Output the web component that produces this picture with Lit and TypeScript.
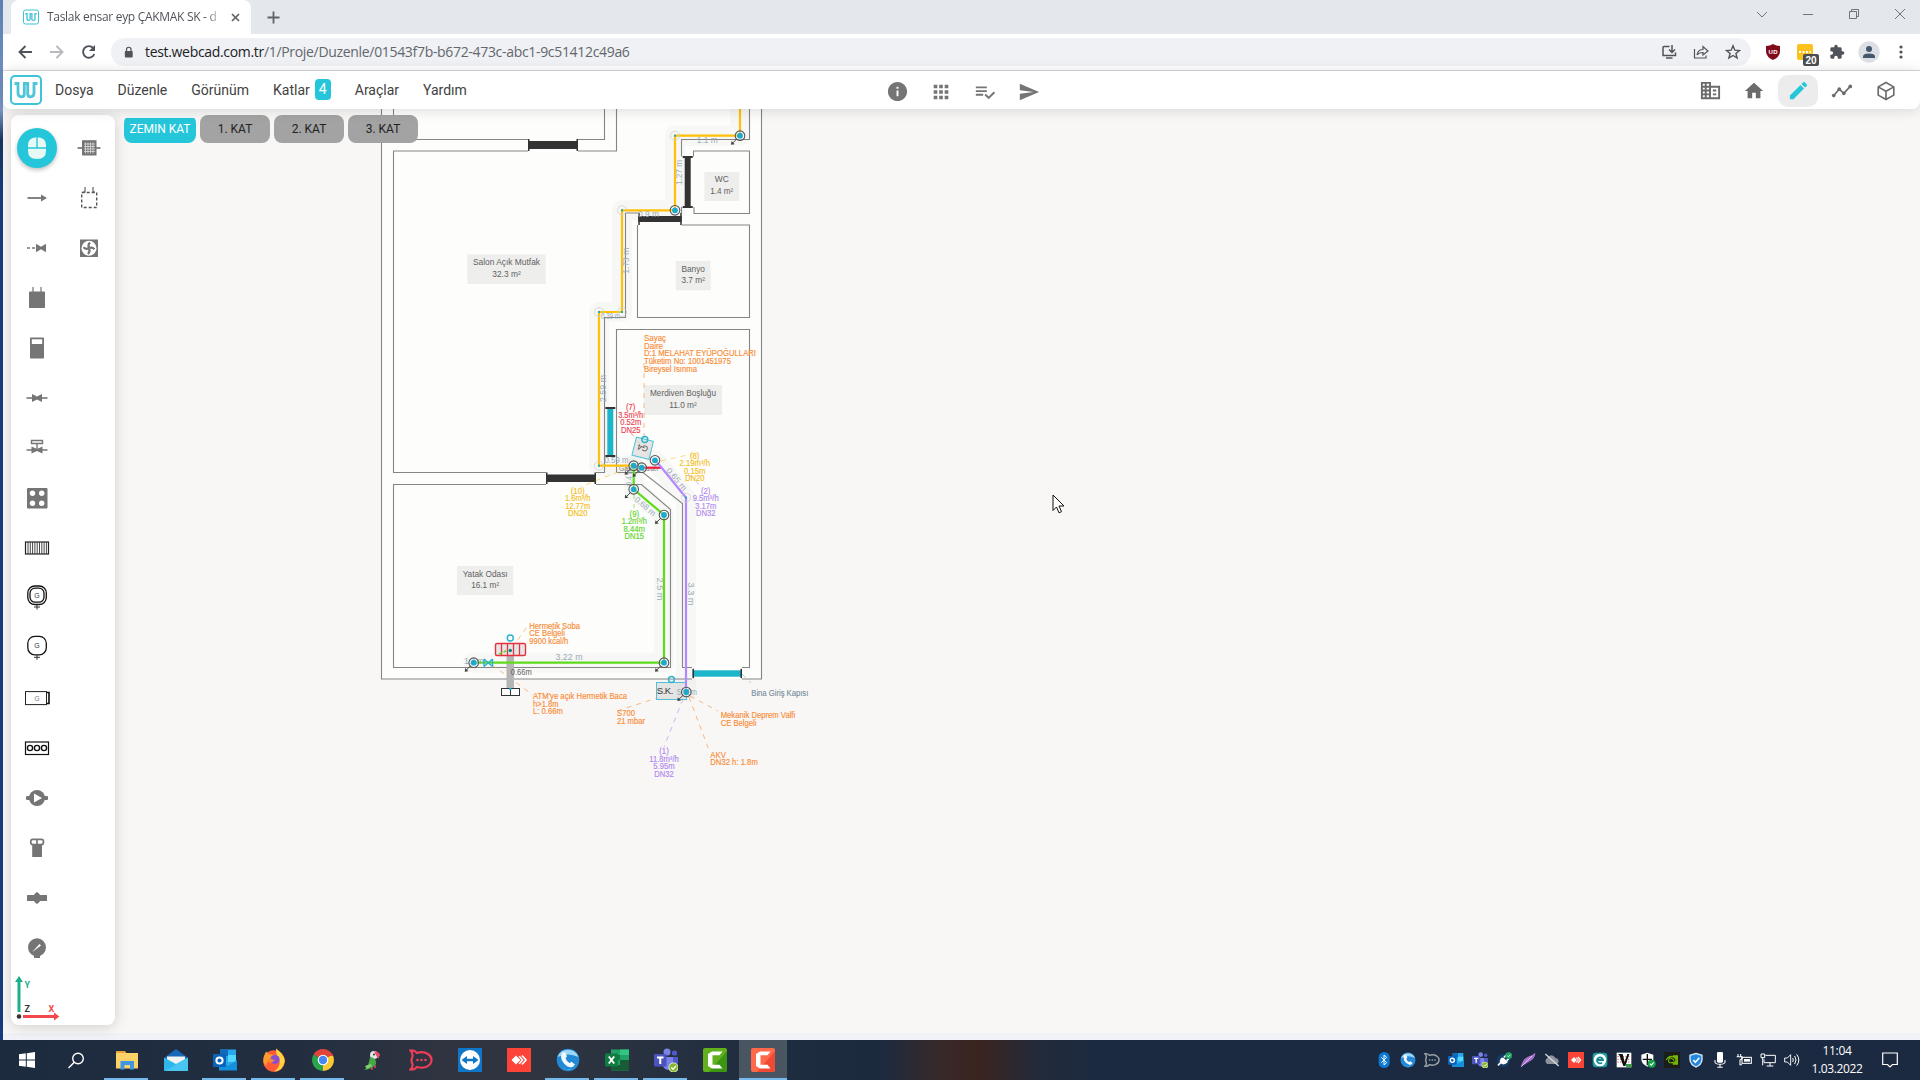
import { LitElement, html, svg, css, type TemplateResult } from "lit";
import { customElement } from "lit/decorators.js";
import { classMap } from "lit/directives/class-map.js";

type Frag = TemplateResult | unknown;

/** Wraps an SVG fragment in a sized icon. */
const icon = (body: Frag, size = 24, box = 24) =>
  html`<svg width=${size} height=${size} viewBox="0 0 ${box} ${box}" fill="currentColor">${body}</svg>`;
const p = (d: string, fill = "currentColor") => svg`<path d=${d} fill=${fill} />`;
const ln = (d: string, w = 1.5, stroke = "currentColor") =>
  svg`<path d=${d} fill="none" stroke=${stroke} stroke-width=${w} />`;

const GREY = "#757575";

/* ---------- logo ---------- */
const logo = svg`
  <rect x="1" y="1" width="30" height="28" rx="4" fill="#fff" stroke="#3fc3d6" stroke-width="2" />
  <path d="M4.500 8.500H8V18Q8 21.800 11.500 21.800Q14.300 21.800 14.300 19V8.500H17.700V19Q17.700 21.800 20.500 21.800Q24 21.800 24 18V8.500H27.500" fill="none" stroke="#4fc6d8" stroke-width="2.800" />`;

/* ---------- left tool palette, drawn in a 32-unit box ---------- */
const dn = (y: number, double: boolean) => svg`
  <rect x="6.800" y=${y} width="18.500" height="18.500" rx="7" fill="none" stroke="#111" stroke-width="1.300" />
  ${double ? svg`<rect x="9" y=${y + 2.2} width="14" height="14" rx="5" fill="none" stroke="#111" stroke-width="1.300" />` : null}
  <text x="16" y=${y + 11.6} font-size="7" text-anchor="middle" fill="#333" font-family="Liberation Sans, sans-serif">G</text>
  <path d="M13 ${y + 21}H19M16 ${y + 18.5}V${y + 23.500}" stroke="#333" stroke-width="1" />`;

const tools: Frag[] = [
  svg`<g fill="#e6f9f5"><path d="M7 15.200V13Q7 6 15.300 5.200V15.200Z" /><path d="M16.700 5.200Q25 6 25 13V15.200H16.700Z" /><path d="M7 16.800H25V19Q25 27 16 27T7 19Z" /></g>`,
  svg`<path d="M6.500 16H22" stroke=${GREY} stroke-width="1.800" /><path d="M20 12.600 26 16 20 19.400Z" fill=${GREY} />`,
  svg`<path d="M6 16H9M11 16H14" stroke=${GREY} stroke-width="1.600" /><path d="M15 11.800 20 14.800 25 11.800V20.200L20 17.200 15 20.200Z" fill=${GREY} />`,
  svg`<path d="M12 5V11M20 5V11" stroke=${GREY} stroke-width="1.200" /><rect x="8" y="9.500" width="16" height="16.500" rx=".8" fill=${GREY} />`,
  svg`<rect x="9" y="5.500" width="14" height="21" rx=".8" fill=${GREY} /><rect x="10.800" y="7.300" width="10.400" height="4.700" fill="#fff" />`,
  svg`<path d="M5.500 16H26.500" stroke=${GREY} stroke-width="1.600" /><path d="M11 12 16 14.600 21 12V20L16 17.400 11 20Z" fill=${GREY} />`,
  svg`<path d="M5.500 18H26.500M16 12V18M10.500 8.500H21.500V11.500H10.500Z" stroke=${GREY} stroke-width="1.400" fill="none" /><path d="M10.500 14.500 16 17 21.500 14.500V21.500L16 19 10.500 21.500Z" fill=${GREY} />`,
  svg`<rect x="6" y="6" width="20.500" height="20.500" rx="1" fill=${GREY} /><g fill="#fff"><circle cx="11.500" cy="11.300" r="2.700" /><circle cx="20.700" cy="11.300" r="2.700" /><circle cx="11.500" cy="21.300" r="2.700" /><circle cx="20.700" cy="21.300" r="2.700" /></g>`,
  svg`<rect x="4.500" y="10" width="23" height="12" fill="none" stroke="#222" stroke-width="1.200" />
      <path d="M7 10V22M9.300 10V22M11.600 10V22M13.900 10V22M16.200 10V22M18.500 10V22M20.800 10V22M23.100 10V22M25.400 10V22" stroke="#333" stroke-width=".9" />`,
  dn(4, true),
  dn(4.3, false),
  svg`<rect x="4.500" y="9.600" width="21" height="13" fill="#fff" stroke="#222" stroke-width="1" /><path d="M26 10.500H28V21.500H26" fill="none" stroke="#111" stroke-width="1.600" /><text x="16" y="18.500" font-size="6.500" text-anchor="middle" fill="#777" font-family="Liberation Sans, sans-serif">G</text>`,
  svg`<rect x="4.500" y="10" width="23" height="12.500" fill="#fff" stroke="#111" stroke-width="1.200" /><g fill="none" stroke="#111" stroke-width="1.400"><circle cx="9" cy="16" r="2.600" /><circle cx="16" cy="16" r="2.600" /><circle cx="23" cy="16" r="2.600" /></g>`,
  svg`<rect x="5" y="14" width="22" height="4" rx="1" fill=${GREY} /><circle cx="16" cy="16" r="8" fill=${GREY} /><path d="M13 11.500V20.500L21 16Z" fill="#fff" />`,
  svg`<rect x="9.800" y="7.300" width="12.600" height="5.200" rx="2" fill="#fff" stroke=${GREY} stroke-width="1.700" /><path d="M16 7V13" stroke=${GREY} stroke-width="1.700" /><path d="M11.200 12.500H21V25H11.200Z" fill=${GREY} />`,
  svg`<rect x="6" y="13" width="20" height="6" rx=".5" fill=${GREY} /><path d="M13 13Q13.500 11.500 16 10 18.500 11.500 19 13V19Q18.500 20.500 16 22 13.500 20.500 13 19Z" fill=${GREY} />`,
  svg`<circle cx="16" cy="15.300" r="9" fill=${GREY} /><rect x="13" y="22" width="6" height="4" fill=${GREY} /><path d="M11 20.300 18.500 12 20 13.500Z" fill="#fff" />`,
];
const sideTools: Frag[] = [
  svg`<path d="M4.500 16H27.500" stroke=${GREY} stroke-width="1.700" /><rect x="9" y="8.200" width="14.500" height="15.300" fill=${GREY} />
      <path d="M11 12H22M11 14.500H22M11 17H22M11 19.500H22M12.500 10.500V21.500M15 10.500V21.500M17.500 10.500V21.500M20 10.500V21.500" stroke="#ddd" stroke-width=".8" />`,
  svg`<rect x="8.700" y="10.500" width="15" height="15" fill="none" stroke="#555" stroke-width="1.400" stroke-dasharray="3 2" /><path d="M12 5V10H10M20 5V10H22" stroke="#555" stroke-width="1.100" fill="none" />`,
  svg`<rect x="7" y="7.500" width="18" height="17.500" fill=${GREY} /><circle cx="16" cy="16.200" r="7.500" fill="#fff" /><g fill="none" stroke=${GREY} stroke-width="2.200"><path d="M16 15.800Q14.500 13 17 10.500M16.200 16.300Q19 14.800 21.500 17.300M16 16.500Q17.500 19.300 15 22M15.800 16.200Q13 17.700 10.500 15.200" /></g>`,
];

/* ---------- header icons ---------- */
const centerIcons: Frag[] = [
  p("M12 2C6.480 2 2 6.480 2 12s4.480 10 10 10 10-4.480 10-10S17.520 2 12 2zm1 15h-2v-6h2v6zm0-8h-2V7h2v2z"),
  p("M4 8h4V4H4v4zm6 12h4v-4h-4v4zm-6 0h4v-4H4v4zm0-6h4v-4H4v4zm6 0h4v-4h-4v4zm6-10v4h4V4h-4zm-6 4h4V4h-4v4zm6 6h4v-4h-4v4zm0 6h4v-4h-4v4z"),
  p("M14 10H2v2h12v-2zm0-4H2v2h12V6zM2 16h8v-2H2v2zm19.500-4.500L23 13l-6.990 7-4.510-4.500L13 14l3.010 3 5.490-5.500z"),
  p("M2.010 21 23 12 2.010 3 2 10l15 2-15 2z"),
];
const modeIcons: Frag[] = [
  svg`<path fill-rule="evenodd" d="M2 3H12.500V7H22V21H2ZM12.500 9V19H20V9ZM4 5V7H6V5ZM8 5V7H10.500V5ZM4 9V11H6V9ZM8 9V11H10.500V9ZM4 13V15H6V13ZM8 13V15H10.500V13ZM4 17V19H6V17ZM8 17V19H10.500V17Z" /><path d="M14.500 11H18V13H14.500ZM14.500 15H18V17H14.500Z" />`,
  p("M10 20v-6h4v6h5v-8h3L12 3 2 12h3v8z"),
  p("M3 17.250V21h3.750L17.810 9.940l-3.750-3.750L3 17.250zM20.710 7.040a.996.996 0 0 0 0-1.410l-2.340-2.340a.996.996 0 0 0-1.410 0l-1.830 1.830 3.750 3.750 1.830-1.830z"),
  svg`<path d="M3 17 9 10 14 14.500 21 7" fill="none" stroke="currentColor" stroke-width="1.800" /><circle cx="3" cy="17" r="2" /><circle cx="9" cy="10" r="2" /><circle cx="14" cy="14.500" r="2" /><circle cx="21" cy="7" r="2" />`,
  ln("M12 2.800 20.500 7.500V16.500L12 21.200 3.500 16.500V7.500ZM3.500 7.500 12 12.200 20.500 7.500M12 12.200V21", 1.8),
];

/* ---------- taskbar icons, 24-unit box ---------- */
const outlook = svg`<rect x="7" y="1.500" width="16" height="19" fill="#28a8ea" /><path d="M7 1.500H15V8H7Z" fill="#0f6cbd" /><path d="M15 7H23V14H15Z" fill="#50d9ff" /><path d="M6 13 15 18 24 12V22.500H6Z" fill="#1490df" /><rect y="6" width="13" height="13" rx="1" fill="#0a63b8" /><circle cx="6.500" cy="12.500" r="3.100" fill="none" stroke="#fff" stroke-width="2" />`;
const teams = svg`<circle cx="13" cy="4" r="3.500" fill="#7b83eb" /><circle cx="20.500" cy="5" r="2.600" fill="#5059c9" /><path d="M11 9H19V17Q18 21 14 22 10 21 9 18Z" fill="#7b83eb" /><path d="M19 9H24V15Q23 18 20 18H19Z" fill="#5059c9" /><rect y="6" width="12.500" height="12.500" rx="1" fill="#4b53bc" /><path d="M3 9.500H9.500M6.250 9.500V16" stroke="#fff" stroke-width="2" /><circle cx="19.500" cy="19.500" r="5" fill="#e8f5d0" /><circle cx="19.500" cy="19.500" r="4.200" fill="#84b72c" /><path d="M17.300 19.500 19 21.200 22 18" fill="none" stroke="#fff" stroke-width="1.400" />`;
const anydesk = svg`<rect width="24" height="24" fill="#fb4337" /><path d="M4.500 12 9 7.500 13.500 12 9 16.500Z" fill="#fff" /><path d="M11 8.500 13 7.500 17 12 13 16.500 11 15.500 14 12Z" fill="#fff" stroke="#fb4337" stroke-width=".8" /><path d="M15 7.500 19 12 15 16.500" fill="none" stroke="#fff" stroke-width="1.700" />`;
const phone = svg`<circle cx="12" cy="12" r="11.300" fill="#2389d7" /><path d="M1.500 9Q12 4 22.500 9A11.200 11.200 0 0 0 1.500 9Z" fill="#9fd6f5" /><path d="M6 19Q12 24 19 19L21.500 15Q18 22 12 22Z" fill="#6ec6f1" /><path d="M6.500 4.500Q4 8 6 12.500 9 18 14 19.300 17.500 19.500 19 16.500L15.500 13.800 13.500 15Q10.500 13.500 9.500 10L11 8.500 9.300 4.300Z" fill="#f2f9fe" />`;
const camtasia = (c1: string, c2: string) => svg`<rect width="24" height="24" rx="2" fill=${c1} /><path d="M24 3V22Q24 24 22 24H6Z" fill=${c2} /><path d="M19.500 3.500H9L5 6V18L9 20.500H19.500L16.500 16.700H9.500V7.300H16.500Z" fill="#fff" />`;
const chat = (c: string) => svg`<path d="M1.500 2.500Q5.500 2 8 5 14 3 19 6 23 9 22.500 12.500 22 17 17 19 12.500 20.500 8 19 5.500 22 1.500 21.500 4 19 3.500 16 1.500 12.500 3.500 8.500 4 5 1.500 2.500Z" fill="none" stroke=${c} stroke-width="2.200" /><g fill=${c}><circle cx="8.500" cy="12" r="1.300" /><circle cx="12.500" cy="12" r="1.300" /><circle cx="16.500" cy="12" r="1.300" /></g>`;

interface TaskApp { body: Frag; open?: boolean; active?: boolean; }
const taskApps: TaskApp[] = [
  { open: true, body: svg`<path d="M1 3H10L11.500 5V8H1Z" fill="#e8a33a" /><rect x="1" y="5" width="22" height="15.500" fill="#fdd367" /><path d="M5.500 21.500V13H19V21.500H15V17H9.500V21.500Z" fill="#3f97e4" />` },
  { body: svg`<path d="M0 10 12 1 24 10V13H0Z" fill="#1769b8" /><path d="M3 8.500H21V17H3Z" fill="#f3f3f3" /><path d="M0 9.500 12 16 24 9.500V23H0Z" fill="#2fb6ea" /><path d="M24 9.500V23H1Z" fill="#52cdf3" opacity=".7" />` },
  { open: true, body: outlook },
  { open: true, body: svg`<circle cx="12" cy="13" r="10.800" fill="#ff5b36" /><path d="M14 .500Q22 6 22.800 13 21 23 12 23.500 19 19 17.500 12 14 8 14 .500Z" fill="#ffd43e" /><path d="M2 8 4 3.500 7 6 12 7Q8 9 10 12Q5 12 4 18 0 14 2 8Z" fill="#ff9b2f" /><circle cx="13" cy="11.500" r="4.600" fill="#8a4fd0" /><path d="M7 10 13 12.500 8 15Q4 13 7 10Z" fill="#ff8a2a" />` },
  { open: true, body: svg`<path d="M12 12 2.500 6.500A11 11 0 0 1 21.500 6.500Z" fill="#e0453a" /><path d="M12 12 2.500 6.500A11 11 0 0 0 12 23Z" fill="#2ba24c" /><path d="M12 12 21.500 6.500A11 11 0 0 1 12 23Z" fill="#fcc934" /><path d="M12 7H21.800" stroke="#e0453a" stroke-width="2" /><circle cx="12" cy="12" r="5.300" fill="#fff" /><circle cx="12" cy="12" r="4.200" fill="#4688f1" />` },
  { body: svg`<circle cx="14" cy="7" r="4" fill="#dfe3e6" /><circle cx="14" cy="6.500" r="1" fill="#333" /><path d="M14 3.500Q19 3 20 7L18 11 16.500 8Z" fill="#ec4f6a" /><path d="M10 9Q17 10 16 16 13 21 4 22 9 18 10 9Z" fill="#45a845" /><path d="M5 18 11 16 12 18 7 21Z" fill="#86ce76" /><path d="M12 19V22M15 17V20" stroke="#ec4f6a" stroke-width="1.300" />` },
  { body: chat("#ee3d58") },
  { body: svg`<rect width="24" height="24" fill="#0f76c8" /><circle cx="12" cy="12" r="10" fill="#fff" /><path d="M3.500 12 9 8V10.800H15V8L20.500 12 15 16V13.200H9V16Z" fill="#0f76c8" />` },
  { body: anydesk },
  { open: true, body: phone },
  { open: true, body: svg`<rect x="6" y="1.500" width="18" height="21" fill="#21a366" /><path d="M15 1.500H24V7H15Z" fill="#33c481" /><path d="M15 12H24V22.500H6V17H15Z" fill="#185c37" /><path d="M6 7H15V12H6Z" fill="#107c41" /><rect y="5.500" width="13" height="13" rx="1" fill="#107c41" /><path d="M3.800 8.500 9.200 15.500M9.200 8.500 3.800 15.500" stroke="#fff" stroke-width="1.900" />` },
  { open: true, body: teams },
  { body: camtasia("#62b01e", "#3b9412") },
  { open: true, active: true, body: camtasia("#ff694a", "#f04a34") },
];

const trayIcons: Frag[] = [
  svg`<rect x="4" y="0" width="16.500" height="24" rx="8" fill="#0c78d4" /><path d="M8 8 16 16 12 19.500V4.500L16 8 8 16" fill="none" stroke="#fff" stroke-width="1.500" />`,
  phone,
  chat("#9aa0a8"),
  outlook,
  teams,
  svg`<circle cx="11" cy="13" r="10" fill="#123c66" /><path d="M3 20 8 15M10 9 16 15Q11 19 8 16T10 9M12 8 15 5M16 13 19 10" stroke="#fff" stroke-width="2.500" fill="#fff" /><circle cx="19" cy="5.500" r="5" fill="#1fa463" /><path d="M17 5.500 18.700 7.200 21.500 4" stroke="#fff" fill="none" stroke-width="1.300" />`,
  svg`<path d="M1 23Q4 10 12 7T23 1Q23 9 16 13T1 23Z" fill="#a873cf" /><path d="M2 22 18 6" stroke="#e3c6f4" stroke-width="1.300" />`,
  svg`<path d="M5 18A5 5 0 0 1 5 9 6.500 6.500 0 0 1 17 9 5 5 0 0 1 20 18Z" fill="#8d939c" /><path d="M2 3 22 21" stroke="#d8dade" stroke-width="2" />`,
  anydesk,
  svg`<rect x="1" y="1" width="22" height="22" rx="5" fill="#1aa0a6" /><circle cx="12" cy="12" r="9.500" fill="#fff" /><path d="M7.500 12H16.500A4.500 4.500 0 1 0 15 16" fill="none" stroke="#138a93" stroke-width="2.800" />`,
  svg`<rect x="1" y="1" width="22" height="22" fill="#fff" /><path d="M2 7H22M2 11H22M2 15H22" stroke="#c33" stroke-width="1.200" stroke-dasharray="2 2" /><path d="M3 3H10L13 15 17 3H20L14 21H11L5 5Z" fill="#111" /><path d="M15 18H23V23H15Z" fill="#39a046" />`,
  svg`<path d="M11 1 20 4V11Q20 18 11 22 2 18 2 11V4Z" fill="#fff" /><path d="M11 3V20M4 11H18" stroke="#111" stroke-width="2" /><circle cx="17.500" cy="17.500" r="6" fill="#16a34a" /><path d="M14.700 17.500 17 19.700 20.500 15.500" stroke="#fff" fill="none" stroke-width="1.600" />`,
  svg`<rect width="24" height="24" fill="#1b1e18" /><path d="M3 12Q8 5 13 7T18 12 12 16 7 12 12 10 14 12" fill="none" stroke="#76b900" stroke-width="1.700" /><path d="M13 5H21V19H13V17Q18 16 19 12 18 8 13 7Z" fill="#76b900" />`,
  svg`<path d="M12 1 22 4V12Q21 20 12 23.500 3 20 2 12V4Z" fill="#d7ecfb" /><path d="M12 3.500 20 5.800V12Q19 18.500 12 21.500 5 18.500 4 12V5.800Z" fill="#2586dd" /><path d="M8 12 11 15.500 17 8.500" fill="none" stroke="#fff" stroke-width="2.300" />`,
  svg`<rect x="7.500" y="0" width="9" height="16" rx="2" fill="#fff" /><path d="M4.500 12V15Q5 18.500 12 18.500T19.500 15V12M12 18.500V23M8 23H16" fill="none" stroke="#fff" stroke-width="1.600" />`,
  svg`<rect x="9" y="8" width="14" height="9" fill="none" stroke="#fff" stroke-width="1.600" /><rect x="12" y="10.500" width="9" height="4" fill="#fff" /><path d="M3 3V7M7 3V7M1 7H9V10L6 12V19H9" fill="none" stroke="#fff" stroke-width="1.600" />`,
  svg`<path d="M8 5H23V16H6V11M15 16V21M10 21H20" fill="none" stroke="#fff" stroke-width="1.500" /><path d="M1.500 3H7V8.500H1.500ZM4 8.500V20" fill="none" stroke="#fff" stroke-width="1.500" />`,
  svg`<path d="M1 9H5L10 4V20L5 15H1Z" fill="none" stroke="#fff" stroke-width="1.400" /><path d="M13 9Q15 12 13 15M16 6Q20 12 16 18M19 3.500Q25.500 12 19 20.500" fill="none" stroke="#fff" stroke-width="1.500" />`,
];

/* ---------- floor plan ---------- */
type Line = [text: string, width: number];
const ORANGE = "#f98b35";
const YELLOW = "#f5bd22";
const GREEN = "#5fd62a";
const PURPLE = "#b087f2";
const RED = "#ee3f55";

interface Note { x: number; y: number; lines: Line[]; color: string; mid?: boolean; }
const notes: Note[] = [
  { x: 644, y: 341.3, color: ORANGE, lines: [["Sayaç", 22], ["Daire", 19], ["D:1 MELAHAT EYÜPOĞULLARI", 112], ["Tüketim No: 1001451975", 87], ["Bireysel Isınma", 53]] },
  { x: 630.7, y: 410, color: RED, mid: true, lines: [["(7)", 9.5], ["3.5m³/h", 25], ["0.52m", 21], ["DN25", 19.5]] },
  { x: 694.7, y: 458.7, color: YELLOW, mid: true, lines: [["(8)", 9.5], ["2.19m³/h", 30.5], ["0.15m", 21.5], ["DN20", 19.5]] },
  { x: 705.7, y: 493.7, color: PURPLE, mid: true, lines: [["(2)", 9.5], ["9.5m³/h", 26], ["3.17m", 21], ["DN32", 19.5]] },
  { x: 634.3, y: 516.7, color: GREEN, mid: true, lines: [["(9)", 9.5], ["1.2m³/h", 25], ["8.44m", 21.5], ["DN15", 19.5]] },
  { x: 577.7, y: 493.5, color: YELLOW, mid: true, lines: [["(10)", 14], ["1.6m³/h", 25.5], ["12.77m", 25], ["DN20", 19.5]] },
  { x: 664, y: 754.3, color: PURPLE, mid: true, lines: [["(1)", 9.5], ["11.8m³/h", 29.5], ["5.95m", 21.5], ["DN32", 19.5]] },
  { x: 529.3, y: 628.7, color: ORANGE, lines: [["Hermetik Soba", 50.7], ["CE Belgeli", 35.7], ["9900 kcal/h", 39]] },
  { x: 533, y: 699.3, color: ORANGE, lines: [["ATM'ye açık Hermetik Baca", 94], ["h>1.8m", 25.5], ["L: 0.66m", 30]] },
  { x: 617, y: 716.3, color: ORANGE, lines: [["S700", 18], ["21 mbar", 28]] },
  { x: 720.7, y: 718.3, color: ORANGE, lines: [["Mekanik Deprem Valfi", 74.5], ["CE Belgeli", 35.7]] },
  { x: 710.3, y: 757.7, color: ORANGE, lines: [["AKV", 15.5], ["DN32 h: 1.8m", 47.5]] },
  { x: 751.3, y: 696.3, color: "#78909c", lines: [["Bina Giriş Kapısı", 57]] },
];

interface Room { x: number; y: number; w: number; h: number; name: string; nw: number; area: string; aw: number; base: number; }
const rooms: Room[] = [
  { x: 467.3, y: 254.3, w: 78.4, h: 29.7, name: "Salon Açık Mutfak", nw: 67, area: "32.3 m²", aw: 28.5, base: 265 },
  { x: 704.3, y: 172, w: 35, h: 29, name: "WC", nw: 14, area: "1.4 m²", aw: 23, base: 182 },
  { x: 675.7, y: 261, w: 35, h: 29.3, name: "Banyo", nw: 23.5, area: "3.7 m²", aw: 23.5, base: 271.7 },
  { x: 644, y: 385, w: 78, h: 30, name: "Merdiven Boşluğu", nw: 66, area: "11.0 m²", aw: 27.5, base: 396 },
  { x: 457, y: 566, w: 56.3, h: 29, name: "Yatak Odası", nw: 45, area: "16.1 m²", aw: 28, base: 576.5 },
];

/** Dimension texts: label, centre x, baseline y, width, rotation. */
const dims: [string, number, number, number, number][] = [
  ["1.1 m", 707.3, 142.7, 21, 0],
  ["1.27 m", 682, 172.5, 25, -90],
  ["0.9 m", 648.5, 217.3, 21, 0],
  ["1.73 m", 629, 260.7, 26, -90],
  ["0.39 m", 610.5, 318.7, 19, 0],
  ["2.59 m", 606, 388.5, 27, -90],
  ["0.59 m", 616.5, 463, 24, 0],
  ["0.4 m", 632, 477, 18, -90],
  ["0.65 m", 674.5, 481, 27, 50],
  ["0.68 m", 643.5, 508.5, 25, 40],
  ["2.5 m", 657, 589, 23, 90],
  ["3.3 m", 687.5, 594, 23, 90],
  ["3.22 m", 569, 660, 27, 0],
  ["1.1m", 474, 664, 20, 0],
  ["5.95m", 687, 694.5, 20, 0],
];

const nodes: [number, number, boolean][] = [
  [740, 135.7, true], [675, 210.3, false], [633.7, 465.7, true], [641.7, 467.7, true], [655, 460.3, false],
  [633.7, 489.3, true], [664, 515, true], [664, 662.7, true], [473.7, 662.7, true], [686.3, 692, true],
];
const joints: [number, number][] = [[675, 135.7], [622, 210.3], [622, 312], [599, 312], [599, 465.7], [686, 497.7]];
const leaders: [string, string][] = [
  ["M644 363V440L648 455", ORANGE], ["M661 461 692 454", YELLOW], ["M628 468 580 487", YELLOW], ["M634 494V508", GREEN], ["M640 444 631 433", RED], ["M688 474 700 485", PURPLE],
  ["M512 648 527 627", ORANGE], ["M492 665 533 695", ORANGE], ["M660 697 617 711", ORANGE], ["M690 696 718 711", ORANGE],
  ["M689 697 709 750", ORANGE], ["M683 699 664 747", PURPLE], ["M742 674 751 683", "#90a4ae"],
];
const walls =
  "M393.500 109V139.500H528M578 139.500H604.500V109M381.500 109V679H692M616.500 109V151H578M528 151H393.500V472.500H546" +
  "M596 472.500H604.500V317.500H625.500V213H638.500M681.500 156.500V139.500H749.500V109M693.500 156.500V151H749.500V213.500H694V207M681.500 207V213" +
  "M681.500 225H749.500V317.500H637.500V225M761.500 109V679H742M546 484.500H393.500V667.500H670.500V509.500L641.500 484.500H596" +
  "M616.500 472.500V329.500H749.500V667.500H742M692 667.500H682.500V503.500L643 472.500H616.500";

@customElement("plan-canvas")
export class PlanCanvas extends LitElement {
  static styles = css`
    :host { display: block; height: 924px; }
    svg { display: block; }
    text { font-family: "Liberation Sans", Arial, sans-serif; }
    .note { font-size: 8.4px; stroke-width: 0.15px; }
    .room { font-size: 8.2px; fill: #616161; }
    .dim { font-size: 8.2px; fill: #9aacb8; }
    .wall { fill: none; stroke: #858585; stroke-width: 1.1; }
    .halo { fill: none; stroke: #888; stroke-opacity: 0.05; stroke-width: 20; stroke-linecap: round; stroke-linejoin: round; }
    .pipe { fill: none; stroke-width: 2.2; }
    .ring { fill: #fff; fill-opacity: 0.3; stroke: #555; stroke-width: 1.1; }
    .joint { fill: none; stroke: #ccc; stroke-width: 0.7; }
    .dot { fill: #1ba9cc; }
    .cyan { fill: none; stroke: #29b2cc; stroke-width: 1.4; }
    .unit { fill: #dedede; fill-opacity: 0.8; stroke: #4fc0d8; stroke-width: 1; }
    .door { fill: #333; }
    .glass { fill: #1cb5c9; }
  `;

  private label(t: string, x: number, y: number, w: number, cls: string, mid: boolean, color?: string) {
    return svg`<text class=${cls} x=${x} y=${y} textLength=${w} lengthAdjust="spacingAndGlyphs"
      text-anchor=${mid ? "middle" : "start"} fill=${color ?? "#616161"} stroke=${color ?? "none"}>${t}</text>`;
  }

  private door(x: number, y: number, len: number, thick: number, gap: number, vertical: boolean, cls: string) {
    return vertical
      ? svg`<rect class=${cls} x=${x} y=${y} width=${thick} height=${len} /><rect class="door" x=${x - gap} y=${y - 1} width=${thick + gap * 2} height="2" /><rect class="door" x=${x - gap} y=${y + len - 1} width=${thick + gap * 2} height="2" />`
      : svg`<rect class=${cls} x=${x} y=${y} width=${len} height=${thick} /><rect class="door" x=${x} y=${y - gap} width="1.500" height=${thick + gap * 2} /><rect class="door" x=${x + len - 1.5} y=${y - gap} width="1.500" height=${thick + gap * 2} />`;
  }

  render() {
    return html`<svg width="1917" height="924" viewBox="3 109 1917 924">
      <rect x="381.500" y="109" width="380" height="570" fill="#fdfdfb" />
      <path class="halo" d="M740 109V135.700H675V210.300H622V312H599V465.700H633.700" />
      <path class="halo" d="M473 662.700H664V515L634 489V466M655 460 686 498V692" />
      <path class="wall" d=${walls} />
      ${this.door(528, 141, 50, 8, 2, false, "door")}
      ${this.door(546, 474.500, 50, 7.5, 2, false, "door")}
      ${this.door(638.3, 216, 43.4, 6, 3, false, "door")}
      ${this.door(684.7, 157, 50, 6, 2, true, "door")}
      ${this.door(607.3, 408, 48, 6, 2, true, "glass")}
      ${this.door(692.5, 670.3, 49.5, 6.4, 1.5, false, "glass")}
      ${rooms.map(r => svg`<rect x=${r.x} y=${r.y} width=${r.w} height=${r.h} fill="#eeeeed" />
        ${this.label(r.name, r.x + r.w / 2, r.base, r.nw, "room", true)}
        ${this.label(r.area, r.x + r.w / 2, r.base + 11.7, r.aw, "room", true)}`)}
      ${leaders.map(([d, c]) => svg`<path d=${d} fill="none" stroke=${c} stroke-width=".9" stroke-dasharray="5 5" opacity=".65" />`)}
      <rect x="506.500" y="651" width="7.500" height="39" fill="#b5b5b5" />
      <rect x="501.500" y="688.500" width="18" height="7" fill="#fff" stroke="#333" /><path d="M510.500 688V696" stroke="#333" />
      <rect x="495.500" y="643.500" width="30" height="12" rx="1.500" fill="#e6e6e6" stroke="#e53240" stroke-width="1.400" />
      <path d="M501.500 643.500V655.500M507.500 643.500V655.500M513.500 643.500V655.500M519.500 643.500V655.500" stroke="#e53240" stroke-width="1.300" />
      <rect class="unit" x="656.500" y="682.500" width="30" height="17" />
      <text x="656.800" y="693.800" font-size="9.500" textLength="16.500" fill="#333">S.K.</text>
      <g transform="rotate(14 642.500 448)"><rect class="unit" x="634" y="439" width="17.500" height="18.500" /><text transform="rotate(180 642.500 448)" x="637" y="451" font-size="8" fill="#444">G4</text></g>
      <text x="619" y="470.500" font-size="6.500" fill="#777" textLength="39">Gaz Tesisatı</text>
      <path class="pipe" stroke="#ffc107" d="M740 109V135.700H675V210.300H622V312H599V465.700H633.700" />
      <path class="pipe" stroke="#f0183c" d="M641.700 467.700H661" />
      <path class="pipe" stroke="#b388ff" d="M655 460.300 661.700 467.700 686 497.700V692" />
      <path class="pipe" stroke="#5fdb1b" d="M633.700 465.700V489.300L664 515V662.700H473.700" />
      ${dims.map(([t, x, y, w, a]) => svg`<text class="dim" x=${x} y=${y} textLength=${w} lengthAdjust="spacingAndGlyphs" text-anchor="middle" transform="rotate(${a} ${x} ${y})">${t}</text>`)}
      ${this.label("0.66m", 510.7, 674.5, 21, "room", false)}
      ${joints.map(([x, y]) => svg`<circle class="joint" cx=${x} cy=${y} r="4.500" /><rect class="dot" x=${x - 1} y=${y - 1} width="2" height="2" />`)}
      ${nodes.map(([x, y, arrow]) => svg`<circle class="ring" cx=${x} cy=${y} r="4.800" /><circle class="dot" cx=${x} cy=${y} r="2.900" />
        ${arrow ? svg`<path d="M${x - 3.3} ${y + 3.3}L${x - 8} ${y + 8}" stroke="#444" stroke-width="1" /><path d="M${x - 9} ${y + 9}L${x - 8.500} ${y + 5.300} ${x - 5.300} ${y + 8.500}Z" fill="#444" />` : null}`)}
      <path class="cyan" d="M484 659 492.500 666.500M484 666.500 492.500 659M484 659V666.500M492.500 659V666.500" stroke-width="1" />
      <path d="M499 654 508 650" stroke=${GREEN} stroke-width="1.500" stroke-dasharray="3 2" />
      <circle cx="510.300" cy="650.500" r="1.700" fill="#00897b" /><circle class="dot" cx="510.300" cy="689" r="1.300" />
      <circle class="cyan" cx="510.300" cy="638" r="3" />
      <circle class="cyan" cx="644.800" cy="439.500" r="3" />
      <circle class="cyan" cx="671.500" cy="679.500" r="3" />
      ${notes.map(n => n.lines.map(([t, w], i) => this.label(t, n.x, n.y + i * 7.55, w, "note", !!n.mid, n.color)))}
    </svg>`;
  }
}

@customElement("app-root")
export class AppRoot extends LitElement {
  static styles = css`
    :host { display: block; width: 1920px; height: 1080px; overflow: hidden; font-family: Roboto, sans-serif; color: #424242; }
    * { box-sizing: border-box; }
    svg { display: block; flex: none; }
    .screen { position: relative; height: 1080px; display: flex; flex-direction: column; background: linear-gradient(#5b7fb5 0, #7895c6 110px, #17335f 140px, #173b7d 190px, #173b7d 100%); }
    .window { height: 1040px; margin-left: 3px; display: flex; flex-direction: column; background: #f8f7f6; }
    .strip { height: 34px; background: #e4e8ed; display: flex; align-items: flex-end; padding-left: 8px; color: #5f6368; }
    .tab { width: 240px; height: 34px; background: #fff; border-radius: 8px 8px 0 0; display: flex; align-items: center; padding: 0 9px 0 12px; }
    .title { width: 176px; margin-left: 8px; font: 12px/16px "Open Sans", sans-serif; letter-spacing: -0.3px; white-space: nowrap; color: #50545a; -webkit-mask-image: linear-gradient(90deg, #000 160px, transparent 176px); }
    .tab-close { margin-left: 8px; }
    .plus { align-self: center; margin-left: 16px; }
    .controls { align-self: flex-start; margin-left: auto; margin-right: -3px; height: 28px; display: flex; color: #70757a; }
    .controls span { width: 46px; display: grid; place-items: center; }
    .toolbar { height: 37px; flex: none; background: #fff; border-bottom: 1px solid #d5d7da; display: flex; align-items: center; padding: 0 3px 0 6px; color: #50545a; }
    .cell { width: 32px; display: grid; place-items: center; flex: none; }
    .dim { color: #b8babd; }
    .omni { height: 28px; width: 1640px; margin-left: 6px; border-radius: 14px; background: #eff1f4; display: flex; align-items: center; padding: 0 2px 0 12px; }
    .url { margin-left: 10px; font: 14px/20px "Open Sans", sans-serif; letter-spacing: -0.32px; color: #63676c; flex: 1; white-space: nowrap; }
    .url b { font-weight: 400; color: #202124; }
    .ext { margin-left: 6px; display: flex; }
    .mark { font-family: "Liberation Sans", sans-serif; font-weight: 700; }
    .header { height: 38px; flex: none; background: #fff; border-radius: 0 0 8px 8px; box-shadow: 0 1px 14px rgba(0, 0, 0, 0.14); display: flex; align-items: center; padding: 0 14px 0 7px; position: relative; z-index: 1; }
    .menu { display: flex; align-items: center; gap: 24px; margin-left: 13px; width: 820px; font-size: 14px; line-height: 20px; padding-bottom: 1px; }
    .menu span { display: flex; align-items: center; gap: 5px; }
    .count { width: 16px; height: 21px; border-radius: 4px; background: #26c6da; color: #fff; text-align: center; line-height: 21px; font-style: normal; }
    .center { display: flex; color: #757575; padding-top: 3px; }
    .center i { width: 44px; display: grid; place-items: center; }
    .modes { display: flex; gap: 4px; margin-left: auto; color: #6b6b6b; padding-top: 1px; }
    .mode { width: 40px; height: 32px; border-radius: 10px; display: grid; place-items: center; }
    .mode.on { background: #ececec; color: #26c6da; }
    .body { height: 924px; position: relative; }
    .overlay { position: absolute; inset: 0; display: flex; align-items: flex-start; padding: 6px 0 0 8px; gap: 9px; }
    .palette { width: 104px; height: 910px; border-radius: 8px; background: #fff; box-shadow: 0 2px 14px rgba(0, 0, 0, 0.16); display: flex; flex-wrap: wrap; padding-top: 8px; align-content: flex-start; }
    .col { width: 52px; display: flex; flex-direction: column; }
    .tool { height: 50px; display: grid; place-items: center; }
    .puck { width: 40px; height: 40px; border-radius: 50%; display: grid; place-items: center; }
    .puck.on { background: #26c6da; box-shadow: 0 2px 4px rgba(0, 0, 0, 0.25); }
    .axes { margin: 2px 0 0 3px; }
    .floors { display: flex; gap: 4px; }
    .floor { width: 70px; height: 28px; border-radius: 8px; background: #a3a3a3; color: #222; font-size: 12px; line-height: 28px; text-align: center; white-space: nowrap; }
    .floor.on { width: 72px; background: linear-gradient(#f1f6f6 3px, #26c6da 3px); color: #fff; }
    .foot { height: 7px; background: #f0f2f7; }
    .taskbar { height: 40px; display: flex; padding-left: 3px; background: linear-gradient(90deg, #1d2b3f 0, #222e40 300px, #2f3440 440px, #2e3440 560px, #1f2d40 760px, #1c2a3f 880px, #38292a 940px, #3a241f 980px, #222a3b 1040px, #1b2a40 1100px, #1b2a40 100%); color: #fff; }
    .start { width: 48px; display: grid; place-items: center; }
    .search { width: 51px; display: grid; place-items: center; }
    .app { width: 49px; height: 40px; display: grid; place-items: center; }
    .app.open { border-bottom: 2px solid transparent; border-image: linear-gradient(90deg, transparent 4px, #76b9ed 4px, #76b9ed 44px, transparent 44px) 2; padding-top: 2px; }
    .app.active.open { width: 48px; background: #4a5562; border-image: none; border-bottom-color: #76b9ed; }
    .tray { margin-left: auto; display: flex; align-items: center; }
    .tray i { width: 24px; display: grid; place-items: center; }
    .clock { width: 66px; text-align: center; font: 12px/18px "Open Sans", sans-serif; letter-spacing: -0.35px; }
    .action { width: 40px; display: grid; place-items: center; margin-right: 10px; }
    .cursor { position: absolute; left: 1052px; top: 494px; z-index: 3; }
  `;

  private menus = ["Dosya", "Düzenle", "Görünüm", "Katlar", "Araçlar", "Yardım"];
  private floors = ["ZEMIN KAT", "1. KAT", "2. KAT", "3. KAT"];

  private renderChrome() {
    return html`
      <div class="strip">
        <div class="tab">
          <svg width="16" height="16" viewBox="0 0 32 30">${logo}</svg>
          <div class="title">Taslak ensar eyp ÇAKMAK SK - d</div>
          <svg class="tab-close" width="9" height="9" viewBox="0 0 9 9">${ln("M1 1 8 8M8 1 1 8", 1.7)}</svg>
        </div>
        <svg class="plus" width="13" height="13" viewBox="0 0 13 13">${ln("M6.500 .500V12.500M.500 6.500H12.500", 1.8)}</svg>
        <div class="controls">
          <span>${icon(ln("M1 4 6 9 11 4", 1), 12, 12)}</span>
          <span>${icon(ln("M1 6.500H11", 1), 12, 12)}</span>
          <span>${icon(ln("M1.500 3.500H8.500V10.500H1.500ZM3.500 3.500V1.500H10.500V8.500H8.500", 1), 12, 12)}</span>
          <span>${icon(ln("M1 1 11 11M11 1 1 11", 1), 12, 12)}</span>
        </div>
      </div>
      <div class="toolbar">
        <div class="cell">${icon(ln("M15 8H2.500M8.500 2 2.500 8 8.500 14", 1.9), 16, 16)}</div>
        <div class="cell dim">${icon(ln("M1 8H13.500M7.500 2 13.500 8 7.500 14", 1.9), 16, 16)}</div>
        <div class="cell">${icon(svg`${ln("M13.300 10A5.800 5.800 0 1 1 12.300 4.200", 1.9)}${p("M14 1V7H8Z")}`, 16, 16)}</div>
        <div class="omni">
          ${icon(svg`<rect x="2" y="5.500" width="8.500" height="7" rx="1" />${ln("M3.800 6V3.800A2.400 2.400 0 0 1 8.700 3.800V6", 1.3)}`, 12, 13)}
          <div class="url"><b>test.webcad.com.tr</b>/1/Proje/Duzenle/01543f7b-b672-473c-abc1-9c51412c49a6</div>
          <div class="cell">${icon(ln("M8.500 2.500H3Q2 2.500 2 3.500V11.500H14.500V8.500M5 14H11.500M11 1V8M8 5.500 11 8.500 14 5.500", 1.5), 16, 16)}</div>
          <div class="cell">${icon(ln("M1.500 5V14H13V11.500M4 11Q5 5.500 10 5.500V2.500L15 7 10 11V8.500Q6 8.500 4 11Z", 1.2), 16, 16)}</div>
          <div class="cell">${icon(ln("M8 1.800 9.800 6.200 14.500 6.500 10.900 9.500 12.100 14 8 11.500 3.900 14 5.100 9.500 1.500 6.500 6.200 6.200Z", 1.4), 16, 16)}</div>
        </div>
        <div class="ext">
          <div class="cell">${icon(svg`<path d="M8 0Q11 2 15 2V8Q14.500 13 8 16 1.500 13 1 8V2Q5 2 8 0Z" fill="#800b1b" /><text class="mark" x="8" y="9.800" text-anchor="middle" font-size="6" fill="#fff" textLength="9">UD</text>`, 16, 16)}</div>
          <div class="cell">
            <svg width="24" height="24" viewBox="0 0 24 24" overflow="visible"><rect x="4" y="4" width="16" height="16" rx="2" fill="#fbc11c" /><path d="M6 12H18" stroke="#fff" stroke-width="2" stroke-dasharray="2 1.500" /><rect x="10" y="14" width="16" height="12" rx="2" fill="#4a4d52" /><text class="mark" x="18" y="23.500" text-anchor="middle" font-size="10" fill="#fff">20</text></svg>
          </div>
          <div class="cell">${icon(p("M20.500 11H19V7a2 2 0 0 0-2-2h-4V3.500a2.500 2.500 0 0 0-5 0V5H4a2 2 0 0 0-2 2v3.800h1.500a2.700 2.700 0 0 1 0 5.400H2V20a2 2 0 0 0 2 2h3.800v-1.500a2.700 2.700 0 0 1 5.400 0V22H17a2 2 0 0 0 2-2v-4h1.500a2.500 2.500 0 0 0 0-5z"), 16)}</div>
          <div class="cell">${icon(svg`<circle cx="11" cy="11" r="10.700" fill="#dcdfe3" /><circle cx="11" cy="8" r="3" fill="#44576d" /><path d="M5 17V15.500Q5 12.500 11 12.500T17 15.500V17Z" fill="#44576d" />`, 22, 22)}</div>
          <div class="cell">${icon(svg`<circle cx="8" cy="3" r="1.600" /><circle cx="8" cy="8" r="1.600" /><circle cx="8" cy="13" r="1.600" />`, 16, 16)}</div>
        </div>
      </div>`;
  }

  private renderHeader() {
    return html`<div class="header">
      <svg width="32" height="30" viewBox="0 0 32 30">${logo}</svg>
      <div class="menu">
        ${this.menus.map(m => html`<span>${m}${m === "Katlar" ? html`<i class="count">4</i>` : null}</span>`)}
      </div>
      <div class="center">${centerIcons.map((b, i) => html`<i>${icon(b, i === 0 ? 23 : 22)}</i>`)}</div>
      <div class="modes">
        ${modeIcons.map((b, i) => html`<div class=${classMap({ mode: true, on: i === 2 })}>${icon(b, i === 2 || i === 0 ? 23 : 22)}</div>`)}
      </div>
    </div>`;
  }

  private renderPalette() {
    const tool = (b: Frag, on: boolean) =>
      html`<div class="tool"><div class=${classMap({ puck: true, on })}>${icon(b, 32, 32)}</div></div>`;
    return html`<div class="palette">
      <div class="col">${tools.map((b, i) => tool(b, i === 0))}</div>
      <div class="col">${sideTools.map(b => tool(b, false))}</div>
      <svg class="axes" width="50" height="46" viewBox="0 0 50 46">
        <path d="M5 37V6" stroke="#1fae8c" stroke-width="3" /><path d="M1 7 5 1 9 7Z" fill="#1fae8c" />
        <path d="M9 41.500H41" stroke="#f5484c" stroke-width="3" /><path d="M40 37.500 45.500 41.500 40 45.500Z" fill="#f5484c" />
        <circle cx="5" cy="41.500" r="2.300" fill="#333" />
        <g font-family="Roboto, sans-serif" font-weight="700" font-size="9"><text x="10.500" y="13" fill="#1fae8c">Y</text><text x="10.500" y="36.500" fill="#333">Z</text><text x="34.500" y="36.500" fill="#f5484c">X</text></g>
      </svg>
    </div>`;
  }

  private renderTaskbar() {
    return html`<div class="taskbar">
      <div class="start">${icon(p("M0 2.300 6.800 1.300V7.500H0ZM7.800 1.200 16 0V7.500H7.800ZM0 8.500H6.800V14.700L0 13.700ZM7.800 8.500H16V16L7.800 14.800Z", "#fff"), 16, 16)}</div>
      <div class="search">${icon(svg`<circle cx="10" cy="6.500" r="5.300" fill="none" stroke="#fff" stroke-width="1.400" />${ln("M6.300 10.300.500 16", 1.500, "#fff")}`, 17, 17)}</div>
      ${taskApps.map(a => html`<div class=${classMap({ app: true, open: !!a.open, active: !!a.active })}>${icon(a.body)}</div>`)}
      <div class="tray">
        ${trayIcons.map(b => html`<i>${icon(b, 16)}</i>`)}
        <div class="clock">11:04<br />1.03.2022</div>
        <div class="action">${icon(ln("M.700 1H15.300V12.500H10.500L8 15 5.500 12.500H.700Z", 1.2, "#fff"), 16, 16)}</div>
      </div>
    </div>`;
  }

  render() {
    return html`<div class="screen">
      <div class="window">
        ${this.renderChrome()}
        ${this.renderHeader()}
        <div class="body">
          <plan-canvas></plan-canvas>
          <div class="overlay">
            ${this.renderPalette()}
            <div class="floors">
              ${this.floors.map((f, i) => html`<div class=${classMap({ floor: true, on: i === 0 })}>${f}</div>`)}
            </div>
          </div>
        </div>
        <div class="foot"></div>
      </div>
      ${this.renderTaskbar()}
      <svg class="cursor" width="13" height="20" viewBox="0 0 13 20"><path d="M1 1V16.500L4.500 13 7 18.800 9.500 17.700 7 12H12Z" fill="#fff" stroke="#111" stroke-width="1" /></svg>
    </div>`;
  }
}
